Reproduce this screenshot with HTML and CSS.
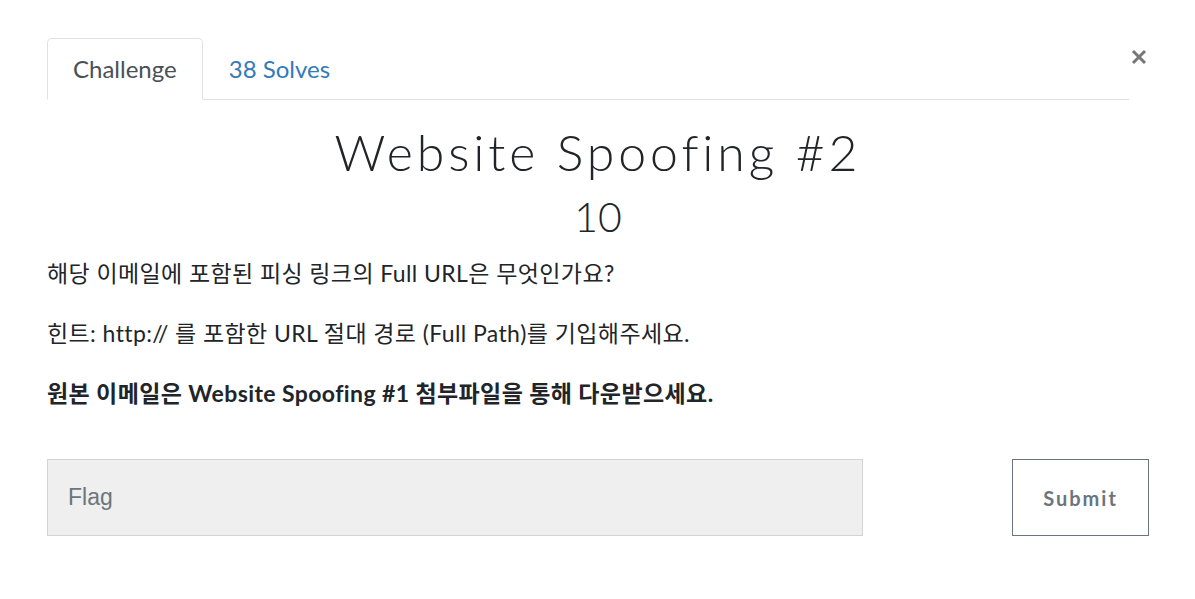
FILE: index.html
```html
<!DOCTYPE html>
<html lang="ko">
<head>
<meta charset="UTF-8">
<meta name="viewport" content="width=device-width, initial-scale=1.0">
<link rel="stylesheet" href="styles.css">
</head>
<body>
  <div class="modal-body">
    <div class="modal-head">
      <ul class="nav-tabs">
        <li class="tab active">Challenge</li>
        <li class="tab">38 Solves</li>
      </ul>
      <button class="close" aria-label="Close">
        <svg width="18" height="18" viewBox="0 0 18 18">
          <path d="M3 3 L15 15 M15 3 L3 15" stroke="#777" stroke-width="3" fill="none"/>
        </svg>
      </button>
    </div>

    <h2 class="challenge-name">Website Spoofing #2</h2>
    <h3 class="challenge-value">10</h3>

    <div class="challenge-desc">
      <p>해당 이메일에 포함된 피싱 링크의 Full URL은 무엇인가요?</p>
      <p>힌트: http:// 를 포함한 URL 절대 경로 (Full Path)를 기입해주세요.</p>
      <p><strong>원본 이메일은 Website Spoofing #1 첨부파일을 통해 다운받으세요.</strong></p>
    </div>

    <div class="submit-row">
      <input class="flag-input" type="text" placeholder="Flag">
      <button class="submit-btn">Submit</button>
    </div>
  </div>
</body>
</html>
```

FILE: styles.css
```css
body {
  margin: 0;
  background: #fff;
  color: #212529;
  font-family: Lato, "Noto Sans CJK KR", sans-serif;
}

.modal-body {
  padding: 38px 46px 0 47px;
}

.modal-head {
  display: flex;
  align-items: flex-start;
}

.nav-tabs {
  flex: 1;
  display: flex;
  margin: 0;
  padding: 0;
  list-style: none;
  border-bottom: 1px solid #dee2e6;
}

.tab {
  padding: 15px 25px 16px 25px;
  font-size: 24px;
  line-height: 29px;
  color: #337ab7;
  border: 1px solid transparent;
  border-radius: 5px 5px 0 0;
  margin-bottom: -1px;
}

.tab.active {
  color: #495057;
  border-color: #dee2e6 #dee2e6 #fff;
  background: #fff;
}

.close {
  width: 20px;
  margin: 10px 0 0 0;
  padding: 0;
  border: none;
  background: none;
  cursor: pointer;
}

.challenge-name {
  margin: 22px 0 0 0;
  text-align: center;
  font-family: Lato, sans-serif;
  font-weight: 300;
  font-size: 50px;
  line-height: 60px;
  letter-spacing: 3.9px;
}

.challenge-value {
  margin: 10px 0 0 0;
  text-align: center;
  font-weight: 300;
  font-size: 41px;
  line-height: 50px;
}

.challenge-desc {
  margin-top: 16px;
}

.challenge-desc p {
  margin: 0 0 30px 0;
  font-size: 23px;
  line-height: 30px;
  letter-spacing: 0.4px;
}

.challenge-desc strong {
  font-weight: 700;
}

.submit-row {
  display: flex;
  justify-content: space-between;
  margin-top: 51px;
}

.flag-input {
  box-sizing: border-box;
  width: 816px;
  height: 77px;
  padding: 0 20px;
  background: #efefef;
  border: 1px solid #d4d4d4;
  font-family: "Liberation Sans", Arial, sans-serif;
  font-size: 23px;
  color: #495057;
}

.flag-input::placeholder {
  color: #6c757d;
}

.submit-btn {
  box-sizing: border-box;
  width: 137px;
  height: 77px;
  background: #fff;
  border: 1px solid #6c757d;
  color: #6c757d;
  font-family: Lato, sans-serif;
  font-weight: 700;
  font-size: 20px;
  letter-spacing: 2px;
}
```
